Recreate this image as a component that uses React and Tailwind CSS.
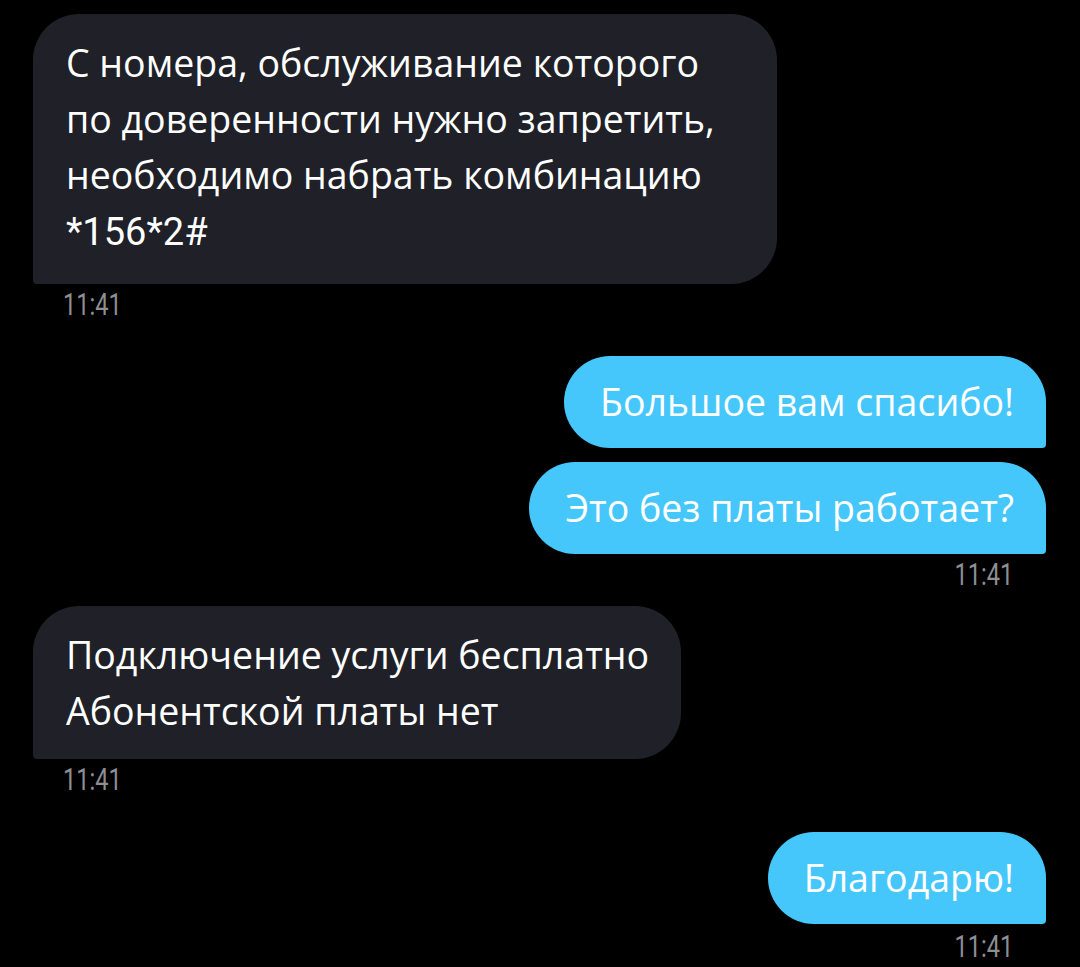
import React from 'react';

const font = { fontFamily: '"Open Sans", "Noto Sans", sans-serif' };

function Digits({ children }) {
  return <span className="font-['Roboto',sans-serif] text-[38px]">{children}</span>;
}

function Time({ right }) {
  return (
    <div className={`h-[30px] leading-[30px] text-[31px] text-[#8e8e93] ${right ? 'self-end pr-[33px]' : 'pl-[30px]'}`}>
      <span className={`inline-block scale-x-[0.76] font-['Roboto',sans-serif] ${right ? 'origin-right' : 'origin-left'}`}>11:41</span>
    </div>
  );
}

function Incoming({ children, className = '' }) {
  return (
    <div className={`self-start rounded-[46px] rounded-bl-[4px] bg-[#202128] pl-[33px] pr-[32px] pt-[21px] text-[37.5px] leading-[56px] text-white ${className}`}>
      {children}
    </div>
  );
}

function Outgoing({ children, className = '' }) {
  return (
    <div className={`self-end rounded-[46px] rounded-br-[4px] bg-[#46c7fb] pl-[36px] pr-[32px] py-[18px] text-[37.5px] leading-[56px] text-white ${className}`}>
      {children}
    </div>
  );
}

export default function App() {
  return (
    <div className="min-h-screen w-[1080px] bg-black" style={font}>
      <div className="flex flex-col pl-[33px] pr-[34px] pt-[14px]">
        <Incoming className="w-[744px] pb-[24px]">
          С номера, обслуживание которого
          <br />
          по доверенности нужно запретить,
          <br />
          необходимо набрать комбинацию
          <br />
          <Digits>*156*2#</Digits>
        </Incoming>
        <div className="mt-[4px]">
          <Time />
        </div>

        <Outgoing className="mt-[38px]">Большое вам спасибо!</Outgoing>
        <Outgoing className="mt-[14px]">Это без платы работает?</Outgoing>
        <div className="mt-[4px] flex flex-col">
          <Time right />
        </div>

        <Incoming className="mt-[18px] pb-[20px]">
          Подключение услуги бесплатно
          <br />
          Абонентской платы нет
        </Incoming>
        <div className="mt-[4px]">
          <Time />
        </div>

        <Outgoing className="mt-[39px]">Благодарю!</Outgoing>
        <div className="mt-[6px] flex flex-col">
          <Time right />
        </div>
      </div>
    </div>
  );
}
